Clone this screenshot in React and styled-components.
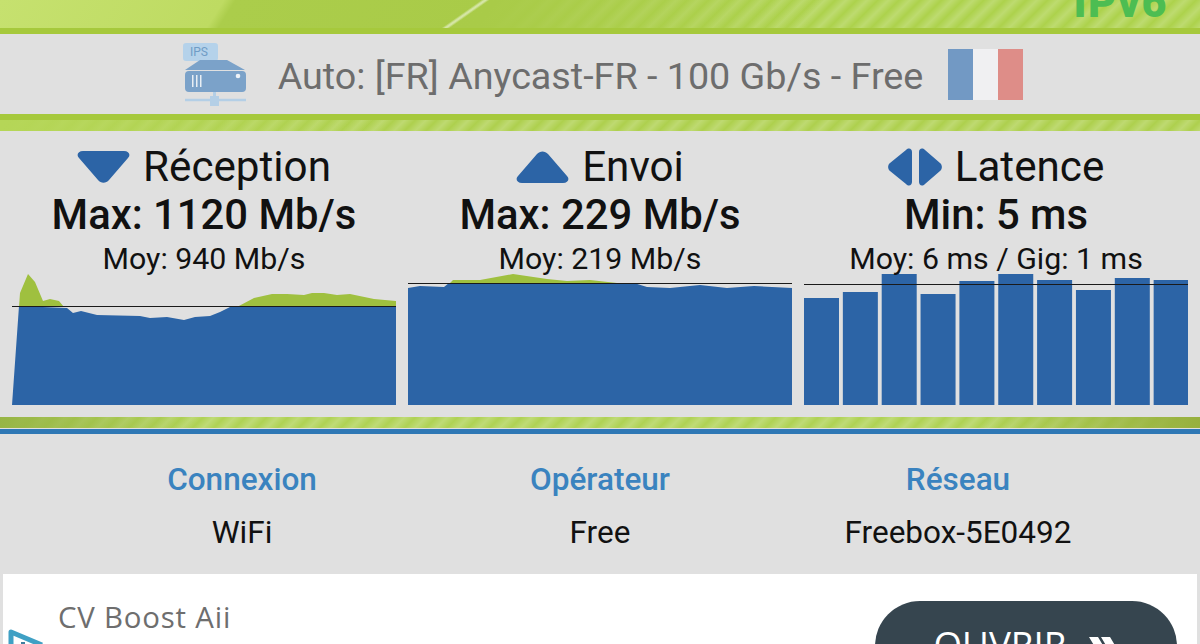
import React from 'react';
import styled, { createGlobalStyle } from 'styled-components';

const GlobalStyle = createGlobalStyle`
  html, body {
    margin: 0;
    padding: 0;
    height: 644px;
    overflow: hidden;
    background: #e0e0e0;
  }
`;

const Screen = styled.div`
  width: 1200px;
  height: 644px;
  overflow: hidden;
  display: flex;
  flex-direction: column;
  background: #e0e0e0;
  font-family: Roboto, "Liberation Sans", sans-serif;
`;

const stripes = `repeating-linear-gradient(-45deg, rgba(255,255,255,0.2) 0, rgba(255,255,255,0) 7.500px, rgba(255,255,255,0.2) 15px)`;

const Banner = styled.header`
  height: 28px;
  flex: none;
  display: flex;
  justify-content: flex-end;
  align-items: flex-end;
  padding-right: 32px;
  overflow: hidden;
  background:
    linear-gradient(145deg, rgba(255,255,255,0) 0 276px, rgba(255,255,255,0.5) 278px 279px, rgba(255,255,255,0) 281px),
    linear-gradient(122deg, #c6e16f 0, #bedb62 190px, #abcd4b 200px, #a9cb48 420px, rgba(170,205,75,0) 700px),
    ${stripes},
    #add24c;
`;

const Ipv6 = styled.span`
  font-size: 43px;
  font-weight: 900;
  line-height: 28px;
  letter-spacing: 1.5px;
  color: #4dbd52;
  transform: translateY(-12px);
`;

const Rule = styled.div`
  height: 6px;
  flex: none;
  background: #a6c93c;
`;

const ServerBar = styled.div`
  height: 80px;
  flex: none;
  display: flex;
  align-items: center;
  justify-content: center;
  gap: 26px;
  padding-left: 6px;
  box-sizing: border-box;
`;

const ServerName = styled.span`
  font-size: 37.7px;
  font-weight: 400;
  color: #6d6d6d;
  margin-left: 5px;
  padding-top: 3px;
`;

const Flag = styled.div`
  width: 75px;
  height: 51px;
  margin-left: -1px;
  display: grid;
  grid-template-columns: repeat(3, 1fr);
`;

const FlagBand = styled.div`
  background: ${(p) => p.$color};
`;

const StripeBand = styled.div`
  height: 11px;
  flex: none;
  background:
    linear-gradient(90deg, #b5d657 0, rgba(181,214,87,0) 400px),
    ${stripes},
    #aed04e;
`;

const ResultGrid = styled.section`
  height: 286px;
  flex: none;
  box-sizing: border-box;
  padding: 12px 12px 0;
  display: grid;
  grid-template-columns: repeat(3, 384px);
  column-gap: 12px;
  justify-content: start;
`;

const Result = styled.div`
  position: relative;
  height: 262px;
  display: flex;
  flex-direction: column;
  align-items: center;
  color: #111;
`;

const ResultTitle = styled.div`
  display: flex;
  align-items: center;
  gap: 13px;
  height: 48px;
  font-size: 42.2px;
  line-height: 48px;
`;

const ResultMax = styled.div`
  font-size: 41.8px;
  font-weight: 500;
  line-height: 48px;
`;

const ResultAvg = styled.div`
  position: relative;
  z-index: 1;
  font-size: 30.3px;
  line-height: 40px;
`;

const Chart = styled.svg`
  position: absolute;
  left: 0;
  bottom: 0;
  display: block;
`;

const GreenBand = styled.div`
  height: 11px;
  margin-bottom: 1px;
  flex: none;
  background:
    linear-gradient(90deg, #97b545 0, rgba(151,181,69,0) 200px),
    linear-gradient(270deg, #97b03e 0, rgba(151,176,62,0) 220px),
    ${stripes},
    #afd254;
`;

const BlueRule = styled.div`
  height: 5px;
  flex: none;
  background: #2f78b5;
`;

const InfoGrid = styled.section`
  height: 139px;
  flex: none;
  box-sizing: border-box;
  padding-top: 28px;
  display: grid;
  grid-template-columns: repeat(3, 358px);
  justify-content: center;
`;

const InfoCell = styled.div`
  display: flex;
  flex-direction: column;
  align-items: center;
  gap: 17px;
`;

const InfoLabel = styled.div`
  font-size: 31.5px;
  font-weight: 500;
  line-height: 36px;
  color: #3a83bf;
`;

const InfoValue = styled.div`
  font-size: 31.5px;
  line-height: 36px;
  color: #111;
`;

const Ad = styled.aside`
  position: relative;
  flex: 1;
  margin: 1px 3px 0;
  background: #fff;
  display: flex;
  justify-content: space-between;
  padding: 25px 20px 0 55px;
  overflow: hidden;
`;

const AdTitle = styled.div`
  font-family: "Open Sans", sans-serif;
  font-size: 29.4px;
  line-height: 36px;
  letter-spacing: 0.8px;
  color: #6e6e6e;
`;

const AdIcon = styled.svg`
  position: absolute;
  left: 5px;
  top: 55px;
`;

const OpenButton = styled.div`
  width: 302px;
  height: 100px;
  margin-top: 2px;
  box-sizing: border-box;
  background: #36454f;
  border-radius: 45px;
  color: #fff;
  display: flex;
  justify-content: center;
  align-items: flex-start;
  gap: 22px;
  padding-top: 21px;
  font-family: "Open Sans", sans-serif;
  font-size: 36.8px;
  line-height: 44px;
`;

const Chevrons = styled.svg`
  margin-top: 15px;
  flex: none;
`;

const ServerIcon = () => (
  <svg width="64" height="64" viewBox="0 0 64 64">
    <rect x="0" y="1" width="35" height="18" rx="3" fill="#b5d2ea" />
    <text x="7" y="14" fontFamily="Roboto, sans-serif" fontSize="12" fill="#6f9cc6">IPS</text>
    <path d="M17 18H44L62 28H2z" fill="#7ba2c9" />
    <rect x="2" y="29" width="61" height="21" rx="4" fill="#7ba2c9" />
    <path d="M9 33h1.500v12H9zM13 33h1.500v12H13zM17 33h1.500v12H17z" fill="#e8eef4" />
    <circle cx="55" cy="34" r="2.300" fill="#eef3f8" />
    <path d="M2 58H63" stroke="#b4cfe6" strokeWidth="2.500" />
    <path d="M30 50h3v5h-3zM27 54h9v10h-9z" fill="#b4cfe6" />
  </svg>
);

const DownIcon = () => (
  <svg width="53" height="32" viewBox="0 0 53 32">
    <path d="M6 0h41c5 0 7 4 4 7L32 29c-3 3.500-8 3.500-11 0L2 7C-1 4 1 0 6 0z" fill="#2c64a6" />
  </svg>
);

const UpIcon = () => (
  <svg width="53" height="32" viewBox="0 0 53 32">
    <path d="M6 32h41c5 0 7-4 4-7L32 3c-3-3.500-8-3.500-11 0L2 25c-3 3-1 7 4 7z" fill="#2c64a6" />
  </svg>
);

const LatencyIcon = () => (
  <svg width="54" height="38" viewBox="0 0 54 38">
    <path d="M24 4v30c0 3-3 5-6 2L2 23c-2.500-2-2.500-6 0-8L18 2c3-3 6-1 6 2z" fill="#2c64a6" />
    <path d="M31 4v30c0 3 3 5 6 2l15-13c2.500-2 2.500-6 0-8L37 2c-3-3-6-1-6 2z" fill="#2c64a6" />
  </svg>
);

const toPath = (pts) => pts.map(([x, y]) => `${x},${y}`).join(' ');

// the green only shows where a peak goes over the average line
const downloadPeaks = [
  [[7, 33], [8, 19], [16, 0], [23, 8], [31, 27], [38, 25], [47, 27], [52, 33]],
  [[225, 33], [242, 24], [260, 20], [275, 20], [292, 21], [300, 19], [312, 19], [325, 21], [338, 20], [362, 25], [384, 27], [384, 33]],
];
const downloadAvg = [[0, 131], [7, 32], [55, 34], [61, 39], [69, 37], [85, 41], [128, 42], [138, 44], [155, 43], [172, 46],
  [183, 43], [198, 42], [208, 38], [218, 33], [225, 32], [384, 32], [384, 131]];

const uploadMax = [[42, 9], [45, 6], [72, 6], [105, 0], [139, 5], [159, 7], [182, 6], [209, 9]];
const uploadAvg = [[0, 131], [0, 14], [12, 12], [36, 13], [41, 9], [226, 9], [239, 13], [262, 14], [292, 11], [319, 14], [346, 12],
  [384, 14], [384, 131]];

const barTops = [24, 18, 0, 20, 7, 0, 6, 16, 4, 6];

const App = () => (
  <Screen>
    <GlobalStyle />
    <Banner>
      <Ipv6>IPv6</Ipv6>
    </Banner>
    <Rule />
    <ServerBar>
      <ServerIcon />
      <ServerName>Auto: [FR] Anycast-FR - 100 Gb/s - Free</ServerName>
      <Flag>
        <FlagBand $color="#7299c4" />
        <FlagBand $color="#f0f0f2" />
        <FlagBand $color="#de8d88" />
      </Flag>
    </ServerBar>
    <Rule />
    <StripeBand />
    <ResultGrid>
      <Result>
        <ResultTitle><DownIcon />Réception</ResultTitle>
        <ResultMax>Max: 1120 Mb/s</ResultMax>
        <ResultAvg>Moy: 940 Mb/s</ResultAvg>
        <Chart width="384" height="131" viewBox="0 0 384 131">
          {downloadPeaks.map((peak, i) => (
            <polygon key={i} points={toPath(peak)} fill="#9fc03f" />
          ))}
          <polygon points={toPath(downloadAvg)} fill="#2c64a6" />
          <path d="M0 32.500H384" stroke="#1a1a1a" strokeWidth="1" />
        </Chart>
      </Result>
      <Result>
        <ResultTitle><UpIcon />Envoi</ResultTitle>
        <ResultMax>Max: 229 Mb/s</ResultMax>
        <ResultAvg>Moy: 219 Mb/s</ResultAvg>
        <Chart width="384" height="131" viewBox="0 0 384 131">
          <polygon points={toPath(uploadMax)} fill="#9fc03f" />
          <polygon points={toPath(uploadAvg)} fill="#2c64a6" />
          <path d="M0 9.500H384" stroke="#1a1a1a" strokeWidth="1" />
        </Chart>
      </Result>
      <Result>
        <ResultTitle><LatencyIcon />Latence</ResultTitle>
        <ResultMax>Min: 5 ms</ResultMax>
        <ResultAvg>Moy: 6 ms / Gig: 1 ms</ResultAvg>
        <Chart width="384" height="131" viewBox="0 0 384 131">
          {barTops.map((top, i) => (
            <rect key={i} x={i * 38.85} y={top} width="35" height={131 - top} fill="#2c64a6" />
          ))}
          <path d="M0 10.500H384" stroke="#1a1a1a" strokeWidth="1" />
        </Chart>
      </Result>
    </ResultGrid>
    <GreenBand />
    <BlueRule />
    <InfoGrid>
      <InfoCell>
        <InfoLabel>Connexion</InfoLabel>
        <InfoValue>WiFi</InfoValue>
      </InfoCell>
      <InfoCell>
        <InfoLabel>Opérateur</InfoLabel>
        <InfoValue>Free</InfoValue>
      </InfoCell>
      <InfoCell>
        <InfoLabel>Réseau</InfoLabel>
        <InfoValue>Freebox-5E0492</InfoValue>
      </InfoCell>
    </InfoGrid>
    <Ad>
      <AdTitle>CV Boost Aii</AdTitle>
      <AdIcon width="40" height="30" viewBox="0 0 40 30">
        <path d="M3 30V3L34 16" fill="none" stroke="#3fa0c4" strokeWidth="5" strokeLinejoin="round" />
        <rect x="13" y="13" width="4" height="6" fill="#3f7f9f" />
      </AdIcon>
      <OpenButton>
        OUVRIR
        <Chevrons width="30" height="30" viewBox="0 0 30 30">
          <path d="M0 0h9l9 15-9 15H0l9-15zM12 0h9l9 15-9 15h-9l9-15z" fill="#fff" />
        </Chevrons>
      </OpenButton>
    </Ad>
  </Screen>
);

export default App;
